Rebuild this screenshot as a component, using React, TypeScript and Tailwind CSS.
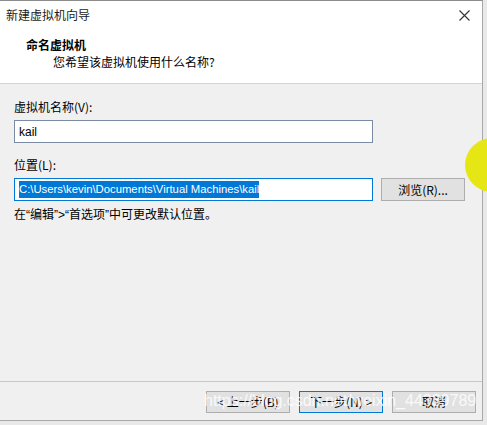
import React from 'react';

const cjk = "font-['Noto_Sans_CJK_SC','Noto_Sans',sans-serif]";
const ui = "font-['Liberation_Sans','Noto_Sans_CJK_SC',sans-serif]";

function DialogButton({ label, primary }: { label: string; primary?: boolean }) {
  return (
    <button
      className={`h-[22px] w-[84px] flex items-center justify-center text-[12px] leading-none text-black bg-[#e1e1e1] border ${
        primary ? 'border-[#0078d7]' : 'border-[#adadad]'
      }`}
    >
      {label}
    </button>
  );
}

export default function App() {
  return (
    <div className={`relative w-[487px] h-[425px] bg-[#e9e9e9] overflow-hidden ${cjk}`}>
      <div className="w-[483px] h-[421px] flex flex-col bg-[#f0f0f0] border-t border-r border-b border-t-[#8c8c8c] border-r-[#a8a8a8] border-b-[#a8a8a8]">
        {/* header */}
        <div className="h-[83px] bg-white border-b border-[#d4d4d4] flex flex-col">
          <div className="h-[28px] flex items-center justify-between pl-[6px] pr-[12px]">
            <span className="text-[12px] text-[#1a1a1a]">新建虚拟机向导</span>
            <svg width="11" height="11" viewBox="0 0 11 11" className="text-[#333]">
              <path d="M0.5 0.5 L10.5 10.5 M10.5 0.5 L0.5 10.5" stroke="currentColor" strokeWidth="1.1" />
            </svg>
          </div>
          <div className="mt-[8px] pl-[26px] text-[12px] leading-[16px] font-bold text-black">命名虚拟机</div>
          <div className="mt-[1px] pl-[53px] text-[12px] leading-[16px] text-black">您希望该虚拟机使用什么名称?</div>
        </div>

        {/* body */}
        <div className="flex-1 flex flex-col pl-[14px] pt-[15px]">
          <div className="text-[12px] leading-[16px] text-black">虚拟机名称(V):</div>
          <div className="mt-[5px] w-[359px] h-[23px] bg-white border border-[#7a8ba3] flex items-center pl-[4px]">
            <span className={`text-[12px] text-black ${ui}`}>kail</span>
          </div>

          <div className="mt-[14px] text-[12px] leading-[16px] text-black">位置(L):</div>
          <div className="mt-[5px] flex items-center">
            <div className="w-[359px] h-[23px] bg-white border border-[#0078d7] flex items-center pl-[4px]">
              <span className={`bg-[#0078d7] text-white text-[11.3px] leading-[17px] ${ui}`}>
                C:\Users\kevin\Documents\Virtual Machines\kail
              </span>
            </div>
            <div className="ml-[8px] w-[84px] h-[23px] bg-[#e1e1e1] border border-[#adadad] flex items-center justify-center text-[12px] text-black">
              浏览(R)...
            </div>
          </div>

          <div className="mt-[5px] text-[12px] leading-[16px] text-black">
            在<span className={ui}>“</span>编辑<span className={ui}>”&gt;“</span>首选项<span className={ui}>”</span>中可更改默认位置。
          </div>
        </div>

        {/* footer */}
        <div className="h-[39px] border-t border-[#c8c8c8] flex justify-end gap-[9px] pt-[9px] pr-[6px]">
          <DialogButton label="< 上一步(B)" />
          <DialogButton label="下一步(N) >" primary />
          <DialogButton label="取消" />
        </div>
      </div>

      {/* cursor highlight */}
      <div className="absolute left-[465px] top-[138px] w-[54px] h-[54px] rounded-full bg-[#e6e614]" />

      {/* watermark */}
      <div className={`absolute left-[204px] top-[391px] text-[16px] leading-[20px] text-white/80 whitespace-nowrap pointer-events-none ${ui}`}>
        https://blog.csdn.net/weixin_44339789
      </div>
    </div>
  );
}
